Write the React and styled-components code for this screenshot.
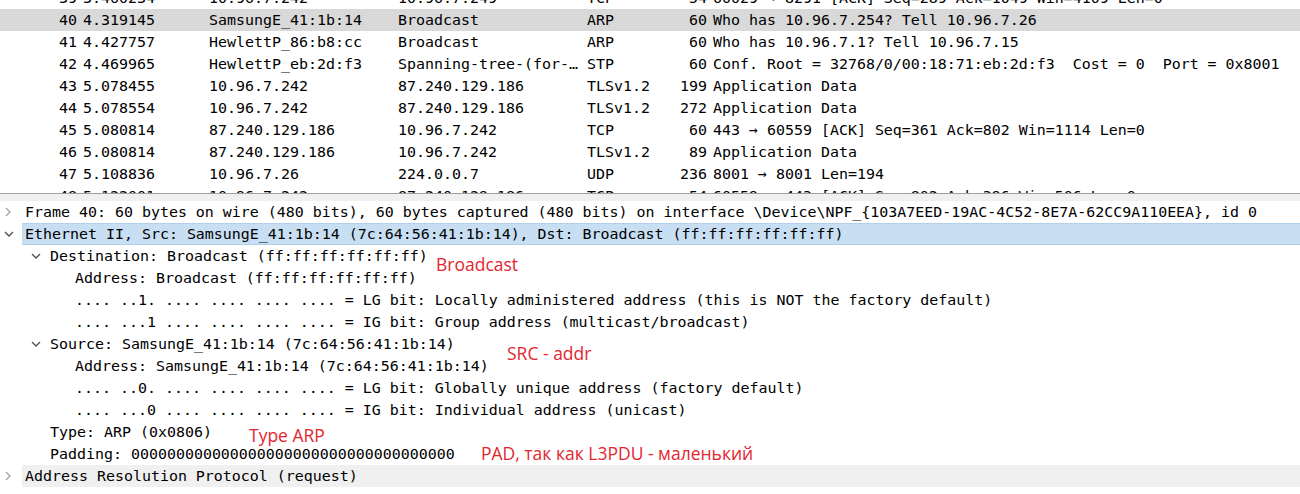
import React from "react";
import styled, { createGlobalStyle } from "styled-components";

const Global = createGlobalStyle`
  html, body { margin: 0; padding: 0; background: #ffffff; }
  body { width: 1300px; height: 494px; overflow: hidden; }
`;

const Page = styled.div`
  width: 1300px;
  height: 494px;
  display: flex;
  flex-direction: column;
  background: #fff;
  font-family: "DejaVu Sans Mono", "Liberation Mono", monospace;
  font-size: 14.95px;
  color: #000;
  overflow: hidden;
`;

const PacketList = styled.div`
  height: 193px;
  overflow: hidden;
  flex: none;
`;

const PacketScroll = styled.div`
  margin-top: -13px;
`;

const PacketRow = styled.div`
  display: grid;
  grid-template-columns: 80px 126px 189px 189px 84px 42px 1fr;
  height: 22px;
  line-height: 22px;
  white-space: pre;
  background: ${(p) => (p.$selected ? "#d9d9d9" : "transparent")};
`;

const Cell = styled.div`
  padding: 0 3px;
  overflow: hidden;
  white-space: pre;
  text-overflow: ${(p) => (p.$clip ? "clip" : "ellipsis")};
  text-align: ${(p) => (p.$right ? "right" : "left")};
`;

const Splitter = styled.div`
  flex: none;
  height: 7px;
  border-top: 1px solid #a0a0a0;
  background: #f0f0f0;
`;

const DetailPane = styled.div`
  position: relative;
  flex: 1;
  background: #fff;
`;

const DetailRow = styled.div`
  display: flex;
  height: 22px;
  line-height: 22px;
  padding-left: ${(p) => p.$level * 25}px;
  white-space: nowrap;
`;

const Toggle = styled.div`
  width: 22px;
  flex: none;
  display: flex;
  align-items: center;
  justify-content: ${(p) => (p.$level === 0 ? "flex-start" : "center")};
  padding-left: ${(p) => (p.$level === 0 ? "4px" : "0")};
  box-sizing: border-box;
`;

const Label = styled.div`
  flex: 1;
  padding-left: 3px;
  box-sizing: border-box;
  background: ${(p) =>
    p.$tone === "blue" ? "#c8def2" : p.$tone === "gray" ? "#f0f0f0" : "transparent"};
  border-top: 1px solid ${(p) => (p.$tone === "blue" ? "#b2d0ec" : "transparent")};
  border-bottom: 1px solid ${(p) => (p.$tone === "blue" ? "#b2d0ec" : "transparent")};
  line-height: 20px;
`;

const Indent = styled.span`
  padding-left: 25px;
`;

const Note = styled.div`
  position: absolute;
  left: ${(p) => p.$x}px;
  top: ${(p) => p.$y}px;
  font-family: "Open Sans", "Noto Sans", sans-serif;
  font-size: 17.5px;
  line-height: 22px;
  color: #e3262f;
  white-space: nowrap;
`;

function Chevron({ open }) {
  return open ? (
    <svg width="10" height="8" viewBox="0 0 10 8">
      <path d="M1 2 L5 6 L9 2" fill="none" stroke="#505050" strokeWidth="1.4" />
    </svg>
  ) : (
    <svg width="8" height="10" viewBox="0 0 8 10">
      <path d="M2 1 L6 5 L2 9" fill="none" stroke="#a6a6a6" strokeWidth="1.4" />
    </svg>
  );
}

const packets = [
  ["39", "3.460234", "10.96.7.242", "10.96.7.249", "TCP", "54", "60029 → 8291 [ACK] Seq=289 Ack=1049 Win=4109 Len=0"],
  ["40", "4.319145", "SamsungE_41:1b:14", "Broadcast", "ARP", "60", "Who has 10.96.7.254? Tell 10.96.7.26", true],
  ["41", "4.427757", "HewlettP_86:b8:cc", "Broadcast", "ARP", "60", "Who has 10.96.7.1? Tell 10.96.7.15"],
  ["42", "4.469965", "HewlettP_eb:2d:f3", "Spanning-tree-(for-bridges)_00", "STP", "60", "Conf. Root = 32768/0/00:18:71:eb:2d:f3  Cost = 0  Port = 0x8001"],
  ["43", "5.078455", "10.96.7.242", "87.240.129.186", "TLSv1.2", "199", "Application Data"],
  ["44", "5.078554", "10.96.7.242", "87.240.129.186", "TLSv1.2", "272", "Application Data"],
  ["45", "5.080814", "87.240.129.186", "10.96.7.242", "TCP", "60", "443 → 60559 [ACK] Seq=361 Ack=802 Win=1114 Len=0"],
  ["46", "5.080814", "87.240.129.186", "10.96.7.242", "TLSv1.2", "89", "Application Data"],
  ["47", "5.108836", "10.96.7.26", "224.0.0.7", "UDP", "236", "8001 → 8001 Len=194"],
  ["48", "5.122001", "10.96.7.242", "87.240.129.186", "TCP", "54", "60559 → 443 [ACK] Seq=802 Ack=396 Win=506 Len=0"],
];

const details = [
  { level: 0, toggle: "closed", text: "Frame 40: 60 bytes on wire (480 bits), 60 bytes captured (480 bits) on interface \\Device\\NPF_{103A7EED-19AC-4C52-8E7A-62CC9A110EEA}, id 0" },
  { level: 0, toggle: "open", tone: "blue", text: "Ethernet II, Src: SamsungE_41:1b:14 (7c:64:56:41:1b:14), Dst: Broadcast (ff:ff:ff:ff:ff:ff)" },
  { level: 1, toggle: "open", text: "Destination: Broadcast (ff:ff:ff:ff:ff:ff)" },
  { level: 2, text: "Address: Broadcast (ff:ff:ff:ff:ff:ff)" },
  { level: 2, text: ".... ..1. .... .... .... .... = LG bit: Locally administered address (this is NOT the factory default)" },
  { level: 2, text: ".... ...1 .... .... .... .... = IG bit: Group address (multicast/broadcast)" },
  { level: 1, toggle: "open", text: "Source: SamsungE_41:1b:14 (7c:64:56:41:1b:14)" },
  { level: 2, text: "Address: SamsungE_41:1b:14 (7c:64:56:41:1b:14)" },
  { level: 2, text: ".... ..0. .... .... .... .... = LG bit: Globally unique address (factory default)" },
  { level: 2, text: ".... ...0 .... .... .... .... = IG bit: Individual address (unicast)" },
  { level: 1, text: "Type: ARP (0x0806)" },
  { level: 1, text: "Padding: " + "0".repeat(36) },
  { level: 0, toggle: "closed", tone: "gray", text: "Address Resolution Protocol (request)" },
];

const notes = [
  { x: 436, y: 52, text: "Broadcast" },
  { x: 507, y: 141, text: "SRC - addr" },
  { x: 249, y: 223, text: "Type ARP" },
  { x: 481, y: 241, text: "PAD, так как L3PDU - маленький" },
];

export default function App() {
  return (
    <>
      <Global />
      <Page>
        <PacketList>
          <PacketScroll>
            {packets.map((p) => (
              <PacketRow key={p[0]} $selected={p[7]}>
                <Cell $right>{p[0]}</Cell>
                <Cell>{p[1]}</Cell>
                <Cell>{p[2]}</Cell>
                <Cell>{p[3]}</Cell>
                <Cell>{p[4]}</Cell>
                <Cell $right>{p[5]}</Cell>
                <Cell $clip>{p[6]}</Cell>
              </PacketRow>
            ))}
          </PacketScroll>
        </PacketList>
        <Splitter />
        <DetailPane>
          {details.map((d, i) => (
            <DetailRow key={i} $level={d.level === 2 ? 1 : d.level}>
              <Toggle $level={d.level}>
                {d.toggle && d.level < 2 ? <Chevron open={d.toggle === "open"} /> : null}
              </Toggle>
              <Label $tone={d.tone}>{d.level === 2 ? <Indent>{d.text}</Indent> : d.text}</Label>
            </DetailRow>
          ))}
          {notes.map((n) => (
            <Note key={n.text} $x={n.x} $y={n.y}>
              {n.text}
            </Note>
          ))}
        </DetailPane>
      </Page>
    </>
  );
}
